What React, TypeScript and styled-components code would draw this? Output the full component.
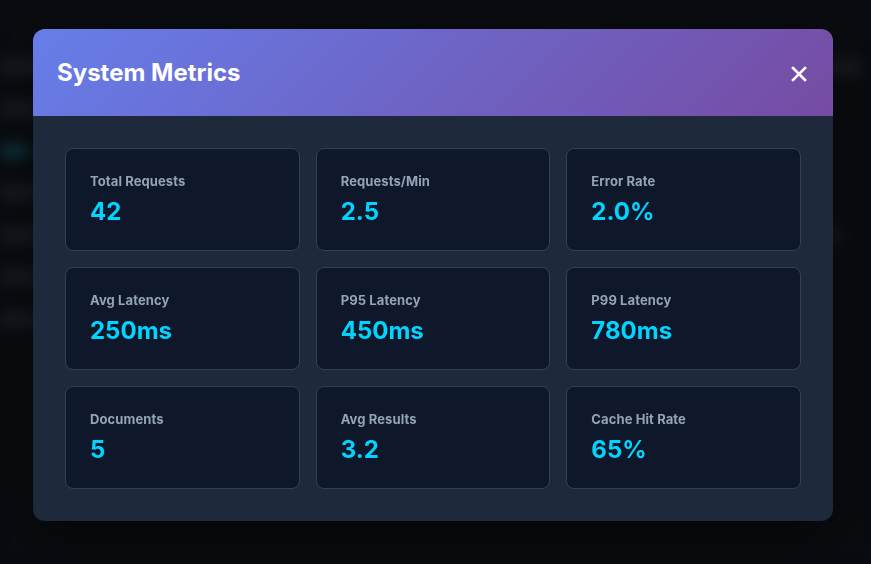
import React from "react";
import styled, { createGlobalStyle } from "styled-components";

const GlobalStyle = createGlobalStyle`
  * { box-sizing: border-box; }
  html, body { margin: 0; padding: 0; background: #0a0d12; }
  body { font-family: Inter, "Noto Sans", "Liberation Sans", sans-serif; }
`;

const Page = styled.div`
  width: 871px;
  height: 564px;
  overflow: hidden;
  display: flex;
  flex-direction: column;
  gap: 28px;
  padding: 60px 0 0 0;
  background: #0c0f14;
  filter: blur(7px);
`;

const PageRow = styled.div<{ $w: number; $tone?: string }>`
  height: 14px;
  width: ${(p) => p.$w}px;
  border-radius: 4px;
  background: ${(p) => (p.$tone === "cyan" ? "rgba(34,211,238,0.25)" : "rgba(148,163,184,0.14)")};
`;

const Overlay = styled.div`
  position: fixed;
  inset: 0;
  background: rgba(0, 0, 0, 0.2);
  display: flex;
  align-items: flex-start;
  justify-content: flex-start;
  padding: 29px 0 0 33px;
`;

const Modal = styled.div`
  width: 800px;
  border-radius: 12px;
  overflow: hidden;
  background: #1e293b;
  box-shadow: 0 20px 50px rgba(0, 0, 0, 0.5);
`;

const Header = styled.div`
  height: 87px;
  padding: 0 24px;
  display: flex;
  align-items: center;
  justify-content: space-between;
  background: linear-gradient(135deg, #667eea 0%, #764ba2 100%);
`;

const Title = styled.h2`
  margin: 0;
  font-size: 24px;
  font-weight: 700;
  color: #ffffff;
`;

const CloseButton = styled.button`
  width: 24px;
  height: 24px;
  padding: 0;
  border: none;
  background: transparent;
  color: #ffffff;
  display: flex;
  align-items: center;
  justify-content: center;
  margin-right: -2px;
  margin-top: 3px;
  cursor: pointer;
`;

const Body = styled.div`
  padding: 32px;
  display: grid;
  grid-template-columns: repeat(3, 1fr);
  gap: 16px;
`;

const Card = styled.div`
  height: 103px;
  padding: 24px;
  background: #0f172a;
  border: 1px solid #334155;
  border-radius: 8px;
  display: flex;
  flex-direction: column;
  gap: 8px;
`;

const Label = styled.div`
  font-size: 13px;
  line-height: 16px;
  font-weight: 700;
  color: #94a3b8;
  letter-spacing: 0.1px;
`;

const Value = styled.div`
  font-size: 24px;
  line-height: 29px;
  font-weight: 700;
  color: #00d4ff;
`;

const metrics = [
  { label: "Total Requests", value: "42" },
  { label: "Requests/Min", value: "2.5" },
  { label: "Error Rate", value: "2.0%" },
  { label: "Avg Latency", value: "250ms" },
  { label: "P95 Latency", value: "450ms" },
  { label: "P99 Latency", value: "780ms" },
  { label: "Documents", value: "5" },
  { label: "Avg Results", value: "3.2" },
  { label: "Cache Hit Rate", value: "65%" },
];

export default function App() {
  return (
    <>
      <GlobalStyle />
      <Page>
        <PageRow $w={860} />
        <PageRow $w={200} />
        <PageRow $w={30} $tone="cyan" />
        <PageRow $w={500} />
        <PageRow $w={840} />
        <PageRow $w={300} />
        <PageRow $w={520} />
      </Page>
      <Overlay>
        <Modal>
          <Header>
            <Title>System Metrics</Title>
            <CloseButton aria-label="Close">
              <svg width="16" height="16" viewBox="0 0 16 16">
                <path d="M2 2 L14 14 M14 2 L2 14" stroke="#fff" strokeWidth="2.6" strokeLinecap="square" />
              </svg>
            </CloseButton>
          </Header>
          <Body>
            {metrics.map((m) => (
              <Card key={m.label}>
                <Label>{m.label}</Label>
                <Value>{m.value}</Value>
              </Card>
            ))}
          </Body>
        </Modal>
      </Overlay>
    </>
  );
}
